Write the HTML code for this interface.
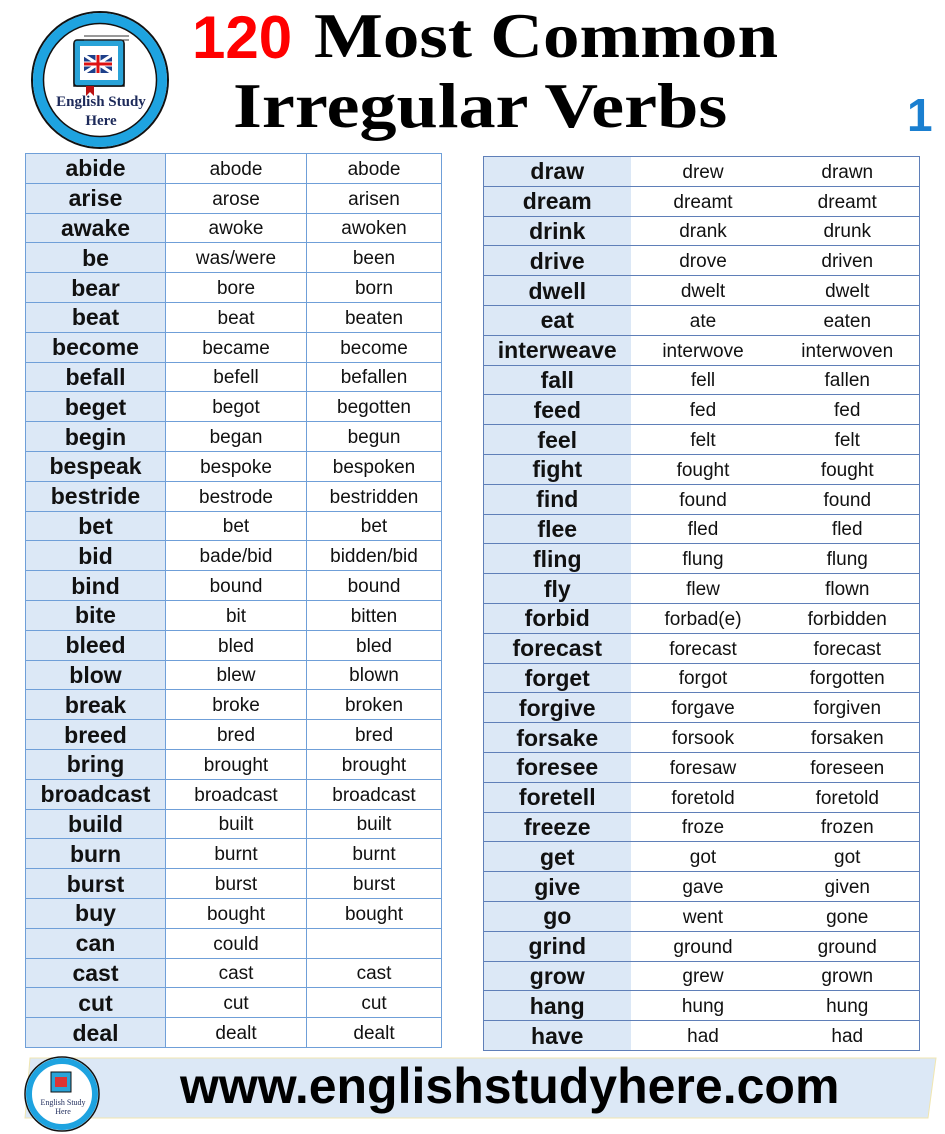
<!DOCTYPE html>
<html><head><meta charset="utf-8"><style>
body{margin:0;width:945px;height:1134px;background:#fff;position:relative;overflow:hidden;font-family:"Liberation Sans",sans-serif}
.t{position:absolute;border-collapse:collapse;table-layout:fixed}
.t td{height:25.8px;padding:3px 0 0 0;text-align:center;color:#111;font-size:19px;line-height:20px;white-space:nowrap;overflow:hidden;vertical-align:middle}
.t td:first-child{background:#dce8f6;font-size:23px;font-weight:bold;padding:0}
#L{left:25px;top:153px;width:416px;border:1px solid #6f9fd8}
#L td{border:1px solid #6f9fd8}
#R{left:483px;top:156px;width:436px;border:1.5px solid #5f7fb8}
#R td{border-top:1.5px solid #5f7fb8;border-bottom:1.5px solid #5f7fb8}
.h{position:absolute;font-family:"Liberation Serif",serif;font-weight:bold;color:#000;font-size:64px;white-space:nowrap;transform-origin:0 0;transform:scaleX(1.14);line-height:72px}
</style></head><body>
<svg style="position:absolute;left:26px;top:6px" width="150" height="150" viewBox="0 0 150 150">
<circle cx="74" cy="74" r="68" fill="#fff" stroke="#111" stroke-width="2"/>
<circle cx="74" cy="74" r="62" fill="none" stroke="#1ea3e0" stroke-width="10"/>
<circle cx="74" cy="74" r="56.5" fill="none" stroke="#111" stroke-width="1.5"/>
<rect x="48" y="38" width="50" height="42" fill="#fff" stroke="#111" stroke-width="1.5"/>
<rect x="48" y="34" width="50" height="46" fill="#29a3d8" stroke="#111" stroke-width="1.5" rx="3"/>
<rect x="54" y="40" width="38" height="34" fill="#fff"/>
<path d="M58 30h45M58 34h45" stroke="#333"/>
<rect x="58" y="49" width="28" height="18" fill="#1d3f8a"/>
<path d="M58 49l28 18M86 49l-28 18" stroke="#fff" stroke-width="3"/>
<path d="M72 49v18M58 58h28" stroke="#fff" stroke-width="5"/>
<path d="M72 49v18M58 58h28" stroke="#d11" stroke-width="3"/>
<path d="M60 80v10l4-4 4 4v-10z" fill="#b11"/>
<text x="75" y="100" text-anchor="middle" font-family="Liberation Serif" font-weight="bold" font-size="15" fill="#1d2a5a">English Study</text>
<text x="75" y="119" text-anchor="middle" font-family="Liberation Serif" font-weight="bold" font-size="15" fill="#1d2a5a">Here</text>
</svg>
<div style="position:absolute;left:192px;top:2px;font-size:60px;font-weight:bold;color:#f00;line-height:72px">120</div>
<div class="h" style="left:314px;top:0px">Most Common</div>
<div class="h" style="left:233px;top:70px;transform:scaleX(1.16)">Irregular Verbs</div>
<div style="position:absolute;left:907px;top:88px;font-size:46px;font-weight:bold;color:#1a7fd0">1</div>
<table class="t" id="L"><colgroup><col style="width:140px"><col style="width:141px"><col style="width:135px"></colgroup>
<tr><td>abide</td><td>abode</td><td>abode</td></tr>
<tr><td>arise</td><td>arose</td><td>arisen</td></tr>
<tr><td>awake</td><td>awoke</td><td>awoken</td></tr>
<tr><td>be</td><td>was/were</td><td>been</td></tr>
<tr><td>bear</td><td>bore</td><td>born</td></tr>
<tr><td>beat</td><td>beat</td><td>beaten</td></tr>
<tr><td>become</td><td>became</td><td>become</td></tr>
<tr><td>befall</td><td>befell</td><td>befallen</td></tr>
<tr><td>beget</td><td>begot</td><td>begotten</td></tr>
<tr><td>begin</td><td>began</td><td>begun</td></tr>
<tr><td>bespeak</td><td>bespoke</td><td>bespoken</td></tr>
<tr><td>bestride</td><td>bestrode</td><td>bestridden</td></tr>
<tr><td>bet</td><td>bet</td><td>bet</td></tr>
<tr><td>bid</td><td>bade/bid</td><td>bidden/bid</td></tr>
<tr><td>bind</td><td>bound</td><td>bound</td></tr>
<tr><td>bite</td><td>bit</td><td>bitten</td></tr>
<tr><td>bleed</td><td>bled</td><td>bled</td></tr>
<tr><td>blow</td><td>blew</td><td>blown</td></tr>
<tr><td>break</td><td>broke</td><td>broken</td></tr>
<tr><td>breed</td><td>bred</td><td>bred</td></tr>
<tr><td>bring</td><td>brought</td><td>brought</td></tr>
<tr><td>broadcast</td><td>broadcast</td><td>broadcast</td></tr>
<tr><td>build</td><td>built</td><td>built</td></tr>
<tr><td>burn</td><td>burnt</td><td>burnt</td></tr>
<tr><td>burst</td><td>burst</td><td>burst</td></tr>
<tr><td>buy</td><td>bought</td><td>bought</td></tr>
<tr><td>can</td><td>could</td><td></td></tr>
<tr><td>cast</td><td>cast</td><td>cast</td></tr>
<tr><td>cut</td><td>cut</td><td>cut</td></tr>
<tr><td>deal</td><td>dealt</td><td>dealt</td></tr>
</table>
<table class="t" id="R"><colgroup><col style="width:147px"><col style="width:145px"><col style="width:144px"></colgroup>
<tr><td>draw</td><td>drew</td><td>drawn</td></tr>
<tr><td>dream</td><td>dreamt</td><td>dreamt</td></tr>
<tr><td>drink</td><td>drank</td><td>drunk</td></tr>
<tr><td>drive</td><td>drove</td><td>driven</td></tr>
<tr><td>dwell</td><td>dwelt</td><td>dwelt</td></tr>
<tr><td>eat</td><td>ate</td><td>eaten</td></tr>
<tr><td>interweave</td><td>interwove</td><td>interwoven</td></tr>
<tr><td>fall</td><td>fell</td><td>fallen</td></tr>
<tr><td>feed</td><td>fed</td><td>fed</td></tr>
<tr><td>feel</td><td>felt</td><td>felt</td></tr>
<tr><td>fight</td><td>fought</td><td>fought</td></tr>
<tr><td>find</td><td>found</td><td>found</td></tr>
<tr><td>flee</td><td>fled</td><td>fled</td></tr>
<tr><td>fling</td><td>flung</td><td>flung</td></tr>
<tr><td>fly</td><td>flew</td><td>flown</td></tr>
<tr><td>forbid</td><td>forbad(e)</td><td>forbidden</td></tr>
<tr><td>forecast</td><td>forecast</td><td>forecast</td></tr>
<tr><td>forget</td><td>forgot</td><td>forgotten</td></tr>
<tr><td>forgive</td><td>forgave</td><td>forgiven</td></tr>
<tr><td>forsake</td><td>forsook</td><td>forsaken</td></tr>
<tr><td>foresee</td><td>foresaw</td><td>foreseen</td></tr>
<tr><td>foretell</td><td>foretold</td><td>foretold</td></tr>
<tr><td>freeze</td><td>froze</td><td>frozen</td></tr>
<tr><td>get</td><td>got</td><td>got</td></tr>
<tr><td>give</td><td>gave</td><td>given</td></tr>
<tr><td>go</td><td>went</td><td>gone</td></tr>
<tr><td>grind</td><td>ground</td><td>ground</td></tr>
<tr><td>grow</td><td>grew</td><td>grown</td></tr>
<tr><td>hang</td><td>hung</td><td>hung</td></tr>
<tr><td>have</td><td>had</td><td>had</td></tr>
</table>
<svg style="position:absolute;left:0;top:1052px" width="945" height="82">
<polygon points="30,6 936,6 928,66 25,66" fill="#dce8f6" stroke="#f0e6b0" stroke-width="1"/>
<circle cx="62" cy="42" r="37" fill="#fff" stroke="#111" stroke-width="1.5"/>
<circle cx="62" cy="42" r="33" fill="none" stroke="#1ea3e0" stroke-width="6"/>
<rect x="51" y="20" width="20" height="20" fill="#29a3d8" stroke="#111"/>
<rect x="55" y="25" width="12" height="10" fill="#d33"/>
<text x="63" y="53" text-anchor="middle" font-family="Liberation Serif" font-size="8" fill="#1d2a5a">English Study</text>
<text x="63" y="62" text-anchor="middle" font-family="Liberation Serif" font-size="8" fill="#1d2a5a">Here</text>
</svg>
<div style="position:absolute;left:180px;top:1056px;font-size:50px;font-weight:bold;color:#000;line-height:60px">www.englishstudyhere.com</div>
</body></html>
